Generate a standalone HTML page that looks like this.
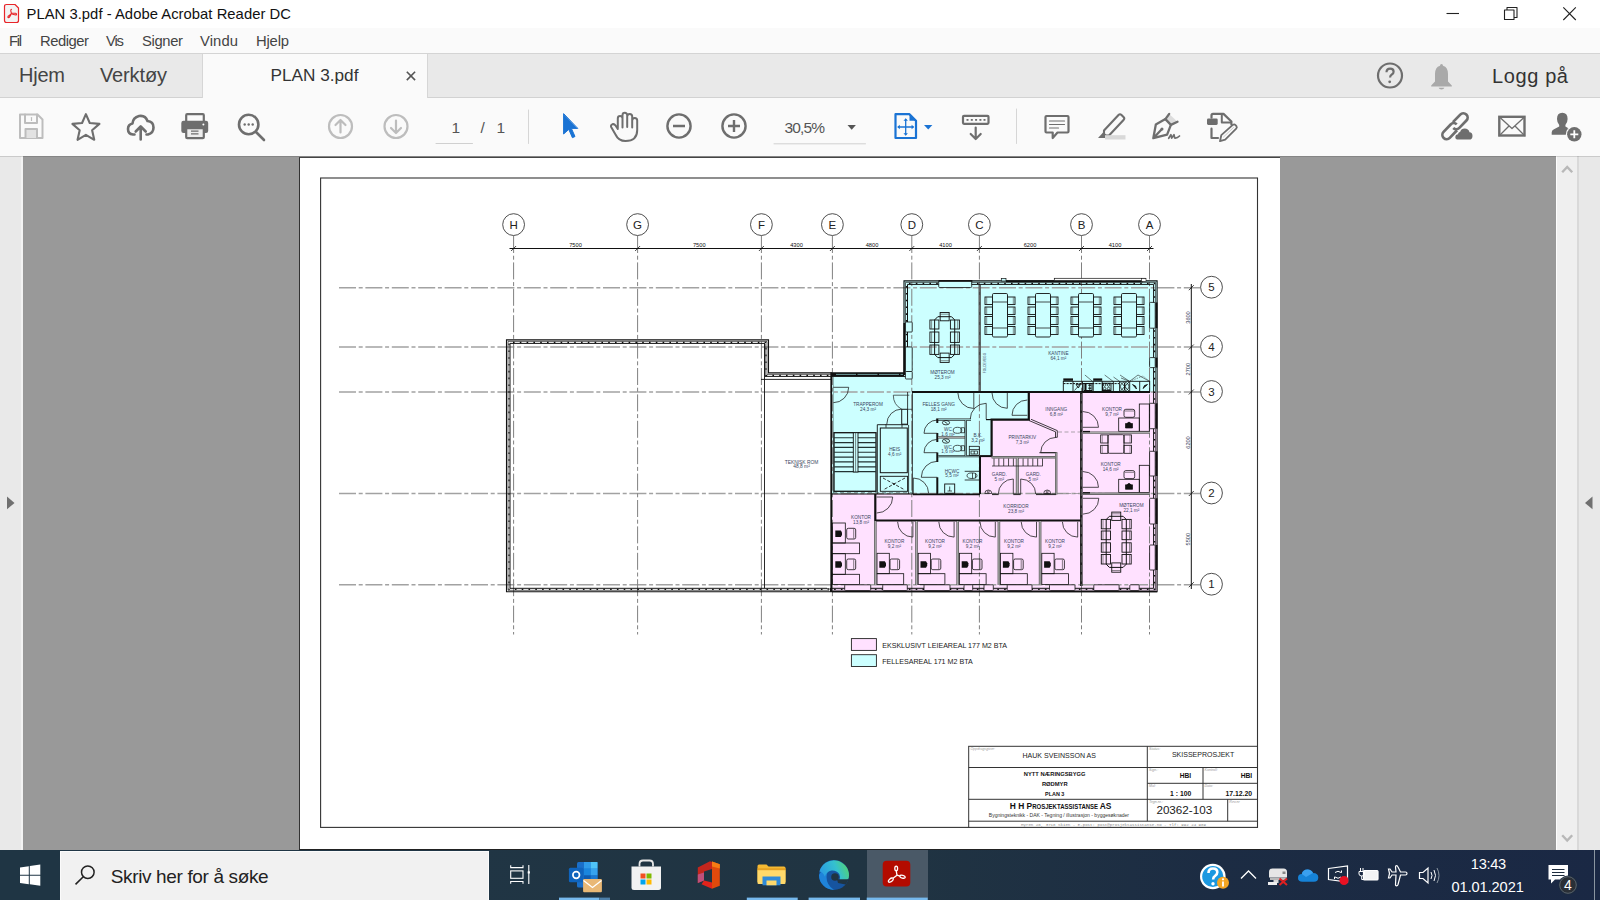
<!DOCTYPE html>
<html><head><meta charset="utf-8"><title>PLAN 3.pdf - Adobe Acrobat Reader DC</title>
<style>
*{box-sizing:border-box;margin:0;padding:0}
html,body{width:1600px;height:900px;overflow:hidden;background:#fff;font-family:"Liberation Sans",sans-serif;}
.abs{position:absolute}
#titlebar{left:0;top:0;width:1600px;height:28px;background:#fff}
#menubar{left:0;top:28px;width:1600px;height:26px;background:#fafafa;border-bottom:1px solid #d4d4d4}
#tabbar{left:0;top:54px;width:1600px;height:44px;background:#e9e9e9;border-bottom:1px solid #d2d2d2}
#tab{left:202px;top:54px;width:226px;height:44px;background:#fafafa;border-left:1px solid #d6d6d6;border-right:1px solid #d6d6d6}
#toolbar{left:0;top:98px;width:1600px;height:58px;background:#fafafa}
#docarea{left:0;top:156px;width:1600px;height:694px;background:#999}
#leftpane{left:0;top:156px;width:23px;height:694px;background:#e9e9e9;border-right:2px solid #f3f3f3}
#rightpane{left:1579px;top:156px;width:21px;height:694px;background:#e8e8e8}
#scroll{left:1556px;top:156px;width:23px;height:694px;background:#efefef;border-right:2px solid #d9d9d9;border-left:1px solid #fdfdfd}
#page{left:299px;top:157px;width:981px;height:693px;background:#fff;border-left:1px solid #333;border-top:1px solid #444;border-bottom:1px solid #222}
#taskbar{left:0;top:850px;width:1600px;height:50px;background:linear-gradient(90deg,#203646 0%,#203442 55%,#1c2c43 76%,#1a2844 100%)}
.t{position:absolute;white-space:nowrap;color:#222}
</style></head><body>
<div class="abs" id="titlebar"></div>
<div class="abs" id="menubar"></div>
<div class="abs" id="tabbar"></div>
<div class="abs" id="tab"></div>
<div class="abs" id="toolbar"></div>
<div class="abs" id="docarea"></div>
<div class="abs" id="leftpane"></div>
<div class="abs" id="scroll"></div>
<div class="abs" id="rightpane"></div>
<div class="abs" id="page"></div>
<div class="abs" id="taskbar"></div>
<div class="t" style="left:26.50px;top:5.97px;font-size:14.80px;color:#111;letter-spacing:0.035px;line-height:17.005px;">PLAN 3.pdf - Adobe Acrobat Reader DC</div>
<div class="t" style="left:9.00px;top:32.67px;font-size:14.80px;color:#444;letter-spacing:-1.309px;line-height:17.005px;">Fil</div>
<div class="t" style="left:40.00px;top:32.67px;font-size:14.80px;color:#444;letter-spacing:-0.472px;line-height:17.005px;">Rediger</div>
<div class="t" style="left:106.00px;top:32.67px;font-size:14.80px;color:#444;letter-spacing:-1.147px;line-height:17.005px;">Vis</div>
<div class="t" style="left:142.00px;top:32.67px;font-size:14.80px;color:#444;letter-spacing:-0.357px;line-height:17.005px;">Signer</div>
<div class="t" style="left:200.00px;top:32.67px;font-size:14.80px;color:#444;letter-spacing:0.103px;line-height:17.005px;">Vindu</div>
<div class="t" style="left:256.00px;top:32.67px;font-size:14.80px;color:#444;letter-spacing:-0.182px;line-height:17.005px;">Hjelp</div>
<div class="t" style="left:19.00px;top:63.88px;font-size:20.00px;color:#444;letter-spacing:-0.224px;line-height:22.980px;">Hjem</div>
<div class="t" style="left:100.00px;top:63.88px;font-size:20.00px;color:#444;letter-spacing:-0.133px;line-height:22.980px;">Verktøy</div>
<div class="t" style="left:270.50px;top:66.16px;font-size:17.20px;color:#333;letter-spacing:0.004px;line-height:19.763px;">PLAN 3.pdf</div>
<div class="t" style="left:1492.00px;top:64.58px;font-size:20.00px;color:#333;letter-spacing:0.617px;line-height:22.980px;">Logg på</div>
<div class="t" style="left:451.50px;top:118.72px;font-size:15.50px;color:#555;letter-spacing:0.000px;line-height:17.809px;">1</div>
<div class="t" style="left:480.50px;top:118.72px;font-size:15.50px;color:#555;letter-spacing:0.000px;line-height:17.809px;">/</div>
<div class="t" style="left:496.50px;top:118.72px;font-size:15.50px;color:#555;letter-spacing:0.000px;line-height:17.809px;">1</div>
<div class="t" style="left:784.40px;top:118.72px;font-size:15.50px;color:#555;letter-spacing:-0.837px;line-height:17.809px;">30,5%</div>
<svg class="abs" style="left:0;top:0" width="1600" height="157" viewBox="0 0 1600 157" fill="none" stroke-linecap="round" stroke-linejoin="round">
<path d="M6.5 4.5h8.5l3.5 3.5v12.5q0 2-2 2h-10q-2 0-2-2v-14q0-2 2-2z" fill="#f3f3f3" stroke="#e8252a" stroke-width="1.2"/>
<g stroke="#e8252a" stroke-width="1.1"><path d="M11.5 9.2c-.9 0-1 1.6 0 4.2M11.5 13.4c-1.2 2-3.3 2.3-3.6 3.4-.3 1 1.300 1.300 2.100-.600.5-1 1.100-2 1.500-2.800zM11.500 13.400c1.200 1.400 3 1.200 4.200 1.500 1.200.300 1.200-1.300-.2-1.600-1.300-.2-2.700.100-4 .100z"/></g>
<g stroke="#222" stroke-width="1.1" stroke-linecap="butt"><path d="M1446.500 13.500h12.500"/><rect x="1504.500" y="10" width="9.500" height="9.500"/><path d="M1507 10v-2.500q0 0 0 0h10v10h-3" /><path d="M1563.300 7.300l12.500 12.700M1575.800 7.300l-12.500 12.700"/></g>
<path d="M406.800 71.800l8.300 8.300M415.100 71.800l-8.300 8.300" stroke="#555" stroke-width="1.600" stroke-linecap="butt"/>
<circle cx="1390" cy="75.500" r="12" stroke="#6e6e6e" stroke-width="2.200"/>
<path d="M1386.500 72.300q0-3.600 3.600-3.600 3.500 0 3.500 3 0 1.800-1.800 2.800-1.700 1-1.700 3" stroke="#6e6e6e" stroke-width="2.200" stroke-linecap="butt"/><circle cx="1389.700" cy="81.800" r="1.400" fill="#6e6e6e"/>
<path d="M1441.500 64q1.500 0 1.500 1.800 5 1.500 5 8.200v7.500l3.800 4v1h-20.600v-1l3.800-4v-7.500q0-6.700 5-8.200 0-1.800 1.500-1.800zM1438.600 87.800h5.800q-.6 1.700-2.900 1.700t-2.900-1.700z" fill="#a9a9a9"/>
<g stroke="#bdbdbd" stroke-width="2"><path d="M20 114.500h17.500l5 5v18.500h-22.500z"/><path d="M25 114.500v8.500h12v-8.500" /><path d="M25.500 138v-9h11.500v9" fill="#e2e2e2"/><path d="M31.500 117.500v3" stroke-width="1.200"/></g>
<path d="M85.90 114.10L89.74 123.02L99.41 123.91L92.11 130.32L94.25 139.79L85.90 134.83L77.55 139.79L79.69 130.32L72.39 123.91L82.06 123.02Z" stroke="#6e6e6e" stroke-width="2.100" stroke-linejoin="round"/>
<g stroke="#6e6e6e" stroke-width="2.600"><path d="M134.500 134.500h-1.500q-5-.5-5-5.500 0-4.500 4.500-5.500 .5-6 6.500-7.500 6.500-1 8.500 5 6 .5 6 6.500 0 5.500-5.500 7h-1.500"/><path d="M140.700 139.500v-12.500M135.700 131.500l5-5 5 5"/></g>
<rect x="186.200" y="114.200" width="17.600" height="9" rx="1" stroke="#6e6e6e" stroke-width="2.200" fill="#fafafa"/><rect x="181.300" y="120.800" width="26.900" height="12.200" rx="2.200" fill="#6e6e6e"/><rect x="186.200" y="128.200" width="17.600" height="10" rx="1" stroke="#6e6e6e" stroke-width="2.200" fill="#ededed"/><path d="M191 131.200h7.500M191 133.900h7.500" stroke="#6e6e6e" stroke-width="1.200" stroke-linecap="butt"/><circle cx="203.400" cy="124.500" r="1" fill="#fff"/>
<g stroke="#6e6e6e" stroke-width="2.600"><circle cx="248.700" cy="124.500" r="9.700"/><path d="M256 132l8 8"/></g><g fill="#6e6e6e"><circle cx="244.700" cy="124.500" r="1.200"/><circle cx="248.700" cy="124.500" r="1.200"/><circle cx="252.700" cy="124.500" r="1.200"/></g>
<g stroke="#bdbdbd" stroke-width="2.200"><circle cx="340.5" cy="126.500" r="11.500"/><path d="M340.5 120.5v12.0M335.5 125.0l5 -5l5 5"/></g>
<g stroke="#bdbdbd" stroke-width="2.200"><circle cx="396.0" cy="126.500" r="11.500"/><path d="M396.0 120.5v12.0M391.0 128.0l5 5l5 -5"/></g>
<path d="M436 143.500h36.500" stroke="#d0d0d0" stroke-width="1"/>
<path d="M528.500 110v33.500M1016.500 109v34.500" stroke="#d6d6d6" stroke-width="1"/>
<path d="M563.600 114v20l5.200-4.600 3.600 8.300 2.600-1.200-3.600-8.100h6z" fill="#1a73d4" stroke="#1a73d4" stroke-width="1" stroke-linejoin="round"/>
<path d="M617.800 128.500V118.400a2.350 2.350 0 0 1 4.700 0V127.500M622.500 118.500V115.200a2.350 2.350 0 0 1 4.700 0V127M627.200 116.500a2.500 2.500 0 0 1 5 0V127.500M632.200 120.500a2.500 2.500 0 0 1 5 0V130Q637.200 141 625.500 141 618.500 141 615.500 134.500L611.300 127.300Q610.300 125.200 612.300 124.300 614.200 123.600 615.500 125.500L617.800 129" stroke="#6e6e6e" stroke-width="2"/>
<g stroke="#6e6e6e" stroke-width="2.400"><circle cx="679" cy="126" r="11.600"/><circle cx="734" cy="126" r="11.600"/><path d="M673 126h12M728 126h12M734 120v12" stroke-linecap="butt"/></g>
<path d="M847.500 125h8.400l-4.200 4.800z" fill="#555"/>
<path d="M774 143.800h91.500" stroke="#d0d0d0" stroke-width="1"/>
<g stroke="#1a73d4" stroke-width="2.200"><path d="M895.500 114.200h14l6.500 6.500v17.300h-20.500z" stroke-linejoin="round"/></g>
<path d="M909.500 114.200v6.500h6.500z" fill="#1a73d4"/>
<g stroke="#1a73d4" stroke-width="1.300" fill="#1a73d4"><path d="M905.700 119.500v15M898.500 127h14.500" /><path d="M905.700 118.200l2.200 2.600h-4.400zM905.700 135.800l2.200-2.600h-4.400zM897.200 127l2.600-2.200v4.400zM914.200 127l-2.600-2.200v4.400z" stroke="none"/></g>
<path d="M924 125h8.400l-4.200 4.600z" fill="#1a73d4"/>
<g stroke="#6e6e6e" stroke-width="2.200"><rect x="963" y="115.800" width="25.500" height="8" rx="1"/><path d="M975.700 127.500v11M970.700 134l5 5 5-5"/></g><g fill="#6e6e6e"><rect x="966.500" y="119" width="2" height="1.800"/><rect x="970.800" y="119" width="2" height="1.800"/><rect x="975.100" y="119" width="2" height="1.800"/><rect x="979.400" y="119" width="2" height="1.800"/><rect x="983.500" y="119" width="2" height="1.800"/></g>
<g stroke="#6e6e6e"><path d="M1046.500 116h21q1 0 1 1v14.500q0 1-1 1h-10l-4.800 5.500v-5.500h-6.200q-1 0-1-1v-14.500q0-1 1-1z" stroke-width="2.200"/><path d="M1049.500 121h15M1049.500 124.500h15M1049.500 128h9" stroke-width="1.200"/></g>
<g stroke="#6e6e6e" stroke-width="2.100"><path d="M1104 130.500l14.500-15.500q1.500-1.500 3 0l2 2q1.500 1.500 0 3l-14.500 15.500h-4.500l-.5-1.500z"/></g><path d="M1103.500 132l3.500 3.500-1.500 2.500h-7.500z" fill="#6e6e6e"/><rect x="1105" y="135.200" width="20.500" height="4.300" fill="#d9d9d9"/>
<path d="M1169.200 113.900l8.300 7.900-6.600 3.100-5.500-5.800z" fill="#dcdcdc"/>
<g stroke="#6e6e6e" stroke-width="2.300"><path d="M1153.300 138.200l2.500-13.600 9.600-5.500 5.500 5.800-3.800 9.700zM1154 137.500l7.500-8"/><path d="M1165.400 119.100l3.800-5.200M1170.900 124.900l6.600-3.100"/></g><circle cx="1162" cy="129" r="1.500" fill="#6e6e6e"/><path d="M1168.700 138.300l2.200-3.600 .8 3.400 2.300-3.400 .7 3.300q2.500.300 4.800-2" stroke="#6e6e6e" stroke-width="1.700"/>
<g stroke="#6e6e6e" stroke-width="2.200"><path d="M1211.500 117.700v-2.300q0-1.500 1.500-1.500h10.500l7.900 7.600v3.100M1211.500 128.700v9.300h6.500"/><path d="M1221.800 115.300v7.200h8.500" stroke-width="2"/><path d="M1221.300 135.200l11.500-10.300q1.500-1 2.700.200l.900 1q1 1.300-.200 2.500l-11 11.100-5.200 1.500z" stroke-width="1.800"/><path d="M1223.500 137l10-9.500" stroke-width="1" stroke="#ccc"/></g><rect x="1207" y="118.400" width="10.700" height="6.500" rx="1.300" fill="#6e6e6e"/>
<g stroke="#6e6e6e" stroke-width="2.700" fill="none" stroke-linecap="butt"><path d="M1452.95 122.13L1460.24 114.58A4.3 4.3 0 0 1 1466.43 120.55L1459.34 127.89A4.3 4.3 0 0 1 1453.26 128.00"/><path d="M1457.05 130.27L1449.76 137.82A4.3 4.3 0 0 1 1443.57 131.85L1450.66 124.51A4.3 4.3 0 0 1 1456.74 124.40"/></g>
<path d="M1458.300 139.600q-3 0-3-2.600 0-2.400 2.600-2.700 .3-2 2.300-2.500 1-3.200 4.500-3.200 3.800 0 4.800 3.700 3 .3 3 3.600 0 3.700-3.500 3.700z" fill="#6e6e6e" stroke="#fafafa" stroke-width="1.400" paint-order="stroke"/>
<g stroke="#6e6e6e"><rect x="1499.300" y="116.800" width="25.200" height="18.700" stroke-width="2.400" stroke-linejoin="miter"/><path d="M1499.500 117l12.500 11.500 12.500-11.500M1499.500 135.500l9.500-9.500M1524.500 135.500l-9.500-9.500" stroke-width="1.300"/></g>
<path d="M1562.300 112.700q5.300 0 5.300 6.200 0 3.700-2.200 6v1.600q2.200 1.500 6 2.800 2.300.800 2.300 3v2.500h-22v-2.500q0-2.200 2.300-3l5.200-2.800v-1.600q-2.200-2.300-2.200-6 0-6.200 5.300-6.200z" fill="#6e6e6e"/><circle cx="1574.300" cy="134.300" r="8.400" fill="#fafafa"/><circle cx="1574.300" cy="134.300" r="7.200" fill="#6e6e6e"/><path d="M1570.300 134.300h8M1574.300 130.300v8" stroke="#fff" stroke-width="1.800" stroke-linecap="butt"/>
</svg>
<svg class="abs" style="left:0;top:156px" width="1600" height="694" viewBox="0 156 1600 694">
<path d="M7 496.500l7.500 6.400-7.500 6.400z" fill="#707070"/>
<path d="M1592.500 496.500l-7.500 6.400 7.500 6.400z" fill="#707070"/>
<path d="M1562.200 172.300l5-5.300 5 5.300" stroke="#b8b8b8" stroke-width="2.400" fill="none"/>
<path d="M1562.200 835.200l5 5.300 5-5.300" stroke="#b8b8b8" stroke-width="2.400" fill="none"/>
<rect x="0" y="156" width="1600" height="1" fill="#000" opacity="0.13"/>
</svg>
<svg class="abs" style="left:300px;top:158px" width="980" height="691" viewBox="300 158 980 691" fill="none" font-family="Liberation Sans, sans-serif">
<rect x="320.60" y="178.00" width="936.90" height="649.40" stroke="#333" stroke-width="1.10" fill="none" />
<path d="M903.50 280.50L1157.50 280.50L1157.50 392.00L1029.00 392.00L1029.00 420.00L992.00 420.00L992.00 456.00L980.00 456.00L980.00 494.00L831.00 494.00L831.00 372.50L903.50 372.50Z" fill="#ccffff" stroke="none"/>
<path d="M1029.00 392.00L1157.50 392.00L1157.50 592.00L831.00 592.00L831.00 494.00L980.00 494.00L980.00 456.00L992.00 456.00L992.00 420.00L1029.00 420.00Z" fill="#ffe1ff" stroke="none"/>
<path d="M339.00 287.70L1200.00 287.70" stroke="#a2a2a2" stroke-width="1.50" stroke-dasharray="17 2.7 4 2.7" />
<path d="M339.00 347.00L1200.00 347.00" stroke="#a2a2a2" stroke-width="1.50" stroke-dasharray="17 2.7 4 2.7" />
<path d="M339.00 392.00L1200.00 392.00" stroke="#a2a2a2" stroke-width="1.50" stroke-dasharray="17 2.7 4 2.7" />
<path d="M339.00 493.50L1200.00 493.50" stroke="#a2a2a2" stroke-width="1.50" stroke-dasharray="17 2.7 4 2.7" />
<path d="M339.00 584.70L1200.00 584.70" stroke="#a2a2a2" stroke-width="1.50" stroke-dasharray="17 2.7 4 2.7" />
<path d="M513.60 236.00L513.60 634.50" stroke="#808080" stroke-width="1.00" stroke-dasharray="17 2.7 4 2.7" />
<path d="M637.60 236.00L637.60 634.50" stroke="#808080" stroke-width="1.00" stroke-dasharray="17 2.7 4 2.7" />
<path d="M761.40 236.00L761.40 634.50" stroke="#808080" stroke-width="1.00" stroke-dasharray="17 2.7 4 2.7" />
<path d="M832.40 236.00L832.40 634.50" stroke="#808080" stroke-width="1.00" stroke-dasharray="17 2.7 4 2.7" />
<path d="M911.80 236.00L911.80 634.50" stroke="#808080" stroke-width="1.00" stroke-dasharray="17 2.7 4 2.7" />
<path d="M979.40 236.00L979.40 634.50" stroke="#808080" stroke-width="1.00" stroke-dasharray="17 2.7 4 2.7" />
<path d="M1081.50 236.00L1081.50 634.50" stroke="#808080" stroke-width="1.00" stroke-dasharray="17 2.7 4 2.7" />
<path d="M1149.50 236.00L1149.50 634.50" stroke="#808080" stroke-width="1.00" stroke-dasharray="17 2.7 4 2.7" />
<circle cx="513.6" cy="224.6" r="10.9" stroke="#222" stroke-width="0.8" fill="#fff"/>
<text x="513.60" y="228.80" font-size="11.50" fill="#222" stroke="none" text-anchor="middle" >H</text>
<circle cx="637.6" cy="224.6" r="10.9" stroke="#222" stroke-width="0.8" fill="#fff"/>
<text x="637.60" y="228.80" font-size="11.50" fill="#222" stroke="none" text-anchor="middle" >G</text>
<circle cx="761.4" cy="224.6" r="10.9" stroke="#222" stroke-width="0.8" fill="#fff"/>
<text x="761.40" y="228.80" font-size="11.50" fill="#222" stroke="none" text-anchor="middle" >F</text>
<circle cx="832.4" cy="224.6" r="10.9" stroke="#222" stroke-width="0.8" fill="#fff"/>
<text x="832.40" y="228.80" font-size="11.50" fill="#222" stroke="none" text-anchor="middle" >E</text>
<circle cx="911.8" cy="224.6" r="10.9" stroke="#222" stroke-width="0.8" fill="#fff"/>
<text x="911.80" y="228.80" font-size="11.50" fill="#222" stroke="none" text-anchor="middle" >D</text>
<circle cx="979.4" cy="224.6" r="10.9" stroke="#222" stroke-width="0.8" fill="#fff"/>
<text x="979.40" y="228.80" font-size="11.50" fill="#222" stroke="none" text-anchor="middle" >C</text>
<circle cx="1081.5" cy="224.6" r="10.9" stroke="#222" stroke-width="0.8" fill="#fff"/>
<text x="1081.50" y="228.80" font-size="11.50" fill="#222" stroke="none" text-anchor="middle" >B</text>
<circle cx="1149.5" cy="224.6" r="10.9" stroke="#222" stroke-width="0.8" fill="#fff"/>
<text x="1149.50" y="228.80" font-size="11.50" fill="#222" stroke="none" text-anchor="middle" >A</text>
<circle cx="1211.5" cy="287.2" r="10.9" stroke="#222" stroke-width="0.8" fill="#fff"/>
<text x="1211.50" y="291.40" font-size="11.50" fill="#222" stroke="none" text-anchor="middle" >5</text>
<circle cx="1211.5" cy="346.5" r="10.9" stroke="#222" stroke-width="0.8" fill="#fff"/>
<text x="1211.50" y="350.70" font-size="11.50" fill="#222" stroke="none" text-anchor="middle" >4</text>
<circle cx="1211.5" cy="391.5" r="10.9" stroke="#222" stroke-width="0.8" fill="#fff"/>
<text x="1211.50" y="395.70" font-size="11.50" fill="#222" stroke="none" text-anchor="middle" >3</text>
<circle cx="1211.5" cy="493.0" r="10.9" stroke="#222" stroke-width="0.8" fill="#fff"/>
<text x="1211.50" y="497.20" font-size="11.50" fill="#222" stroke="none" text-anchor="middle" >2</text>
<circle cx="1211.5" cy="584.2" r="10.9" stroke="#222" stroke-width="0.8" fill="#fff"/>
<text x="1211.50" y="588.40" font-size="11.50" fill="#222" stroke="none" text-anchor="middle" >1</text>
<path d="M509.50 248.50L1153.50 248.50" stroke="#111" stroke-width="1.00" />
<path d="M511.10 251.00L516.10 246.00" stroke="#111" stroke-width="0.80" />
<path d="M635.10 251.00L640.10 246.00" stroke="#111" stroke-width="0.80" />
<path d="M758.90 251.00L763.90 246.00" stroke="#111" stroke-width="0.80" />
<path d="M829.90 251.00L834.90 246.00" stroke="#111" stroke-width="0.80" />
<path d="M909.30 251.00L914.30 246.00" stroke="#111" stroke-width="0.80" />
<path d="M976.90 251.00L981.90 246.00" stroke="#111" stroke-width="0.80" />
<path d="M1079.00 251.00L1084.00 246.00" stroke="#111" stroke-width="0.80" />
<path d="M1147.00 251.00L1152.00 246.00" stroke="#111" stroke-width="0.80" />
<text x="575.50" y="246.50" font-size="5.70" fill="#111" stroke="none" text-anchor="middle" >7500</text>
<text x="699.25" y="246.50" font-size="5.70" fill="#111" stroke="none" text-anchor="middle" >7500</text>
<text x="796.50" y="246.50" font-size="5.70" fill="#111" stroke="none" text-anchor="middle" >4300</text>
<text x="872.00" y="246.50" font-size="5.70" fill="#111" stroke="none" text-anchor="middle" >4800</text>
<text x="945.50" y="246.50" font-size="5.70" fill="#111" stroke="none" text-anchor="middle" >4100</text>
<text x="1030.00" y="246.50" font-size="5.70" fill="#111" stroke="none" text-anchor="middle" >6200</text>
<text x="1115.00" y="246.50" font-size="5.70" fill="#111" stroke="none" text-anchor="middle" >4100</text>
<path d="M1191.30 284.00L1191.30 589.00" stroke="#111" stroke-width="1.00" />
<path d="M1188.80 290.20L1193.80 285.20" stroke="#111" stroke-width="0.80" />
<path d="M1188.80 349.50L1193.80 344.50" stroke="#111" stroke-width="0.80" />
<path d="M1188.80 394.50L1193.80 389.50" stroke="#111" stroke-width="0.80" />
<path d="M1188.80 496.00L1193.80 491.00" stroke="#111" stroke-width="0.80" />
<path d="M1188.80 587.20L1193.80 582.20" stroke="#111" stroke-width="0.80" />
<text transform="translate(1190 317.5) rotate(-90)" font-size="5.6" fill="#2a3550" text-anchor="middle">3600</text>
<text transform="translate(1190 369.2) rotate(-90)" font-size="5.6" fill="#2a3550" text-anchor="middle">2700</text>
<text transform="translate(1190 442.5) rotate(-90)" font-size="5.6" fill="#2a3550" text-anchor="middle">6200</text>
<text transform="translate(1190 539.2) rotate(-90)" font-size="5.6" fill="#2a3550" text-anchor="middle">5500</text>
<path d="M830.50 588.00L830.50 591.80L506.50 591.80L506.50 339.90L768.50 339.90L768.50 372.90L831.00 372.90" stroke="#111" stroke-width="1.10" />
<path d="M829.00 588.00L829.00 590.30L508.00 590.30L508.00 341.40L767.00 341.40L767.00 374.40L831.00 374.40" stroke="#222" stroke-width="0.70" />
<path d="M828.00 588.00L828.00 589.30L509.00 589.30L509.00 342.40L766.00 342.40L766.00 375.40L831.00 375.40" stroke="#111" stroke-width="1.20" stroke-dasharray="1.6 5.2" />
<path d="M827.00 588.00L827.00 588.30L510.00 588.30L510.00 343.40L765.00 343.40L765.00 376.40L831.00 376.40" stroke="#111" stroke-width="1.00" />
<path d="M764.50 344.00L764.50 588.00" stroke="#111" stroke-width="0.90" />
<path d="M761.00 379.40L832.00 379.40" stroke="#111" stroke-width="0.90" />
<path d="M831.00 372.90L904.00 372.90L904.00 280.90L1157.10 280.90L1157.10 591.80L831.00 591.80" stroke="#111" stroke-width="1.10" />
<path d="M831.00 374.40L905.50 374.40L905.50 282.40L1155.60 282.40L1155.60 590.30L831.00 590.30" stroke="#222" stroke-width="0.70" />
<path d="M831.00 375.40L906.50 375.40L906.50 283.40L1154.60 283.40L1154.60 589.30L831.00 589.30" stroke="#111" stroke-width="1.20" stroke-dasharray="1.6 5.2" />
<path d="M831.00 376.40L907.50 376.40L907.50 284.40L1153.60 284.40L1153.60 588.30L831.00 588.30" stroke="#111" stroke-width="1.00" />
<path d="M831.20 372.40L831.20 592.00" stroke="#111" stroke-width="1.70" />
<path d="M833.40 377.00L833.40 494.00" stroke="#577" stroke-width="0.60" />
<rect x="851.40" y="638.60" width="25.00" height="11.80" stroke="#222" stroke-width="0.90" fill="#ffe1ff" />
<rect x="851.40" y="654.70" width="25.00" height="11.80" stroke="#222" stroke-width="0.90" fill="#ccffff" />
<text x="882.20" y="648.20" font-size="7.30" fill="#222" textLength="124.80" lengthAdjust="spacingAndGlyphs" >EKSKLUSIVT LEIEAREAL 177 M2 BTA</text>
<text x="882.20" y="663.90" font-size="7.30" fill="#222" textLength="90.50" lengthAdjust="spacingAndGlyphs" >FELLESAREAL 171 M2 BTA</text>
<path d="M968.70 746.30L968.70 827.50" stroke="#333" stroke-width="1.00" />
<path d="M968.20 746.30L1258.00 746.30" stroke="#333" stroke-width="1.00" />
<path d="M968.70 767.50L1258.00 767.50" stroke="#333" stroke-width="1.00" />
<path d="M968.70 799.30L1258.00 799.30" stroke="#333" stroke-width="1.00" />
<path d="M968.70 821.20L1258.00 821.20" stroke="#333" stroke-width="1.00" />
<path d="M1147.30 746.30L1147.30 821.20" stroke="#333" stroke-width="1.00" />
<path d="M1147.30 783.30L1258.00 783.30" stroke="#333" stroke-width="1.00" />
<path d="M1203.00 767.50L1203.00 799.30" stroke="#333" stroke-width="1.00" />
<path d="M1227.70 799.30L1227.70 821.20" stroke="#333" stroke-width="1.00" />
<text x="1022.50" y="757.50" font-size="7.80" fill="#222" textLength="73.50" lengthAdjust="spacingAndGlyphs" >HAUK SVEINSSON AS</text>
<text x="1023.80" y="775.90" font-size="6.10" fill="#111" textLength="61.60" lengthAdjust="spacingAndGlyphs" font-weight="bold" >NYTT NÆRINGSBYGG</text>
<text x="1041.90" y="785.90" font-size="6.10" fill="#111" textLength="25.80" lengthAdjust="spacingAndGlyphs" font-weight="bold" >RØDMYR</text>
<text x="1045.00" y="795.60" font-size="6.10" fill="#111" textLength="19.40" lengthAdjust="spacingAndGlyphs" font-weight="bold" >PLAN 3</text>
<text x="1009.8" y="809" font-size="9.8" fill="#111" font-weight="bold" textLength="101.7" lengthAdjust="spacingAndGlyphs">H H P<tspan font-size="7">ROSJEKTASSISTANSE </tspan> AS</text>
<text x="988.80" y="816.50" font-size="5.30" fill="#333" textLength="140.20" lengthAdjust="spacingAndGlyphs" >Bygningsteknikk - DAK - Tegning / illustrasjon - byggesøknader</text>
<text x="1021.00" y="825.60" font-size="3.60" fill="#888" textLength="185.00" lengthAdjust="spacingAndGlyphs" font-family="Liberation Mono, monospace">Myren 28, 3718 Skien - E-post: post@prosjektassistanse.no - Tlf: 992 24 989</text>
<text x="1171.90" y="757.40" font-size="7.40" fill="#222" textLength="62.40" lengthAdjust="spacingAndGlyphs" >SKISSEPROSJEKT</text>
<text x="1179.80" y="778.00" font-size="6.60" fill="#111" textLength="11.40" lengthAdjust="spacingAndGlyphs" font-weight="bold" >HBI</text>
<text x="1240.70" y="778.00" font-size="6.60" fill="#111" textLength="11.50" lengthAdjust="spacingAndGlyphs" font-weight="bold" >HBI</text>
<text x="1170.10" y="795.60" font-size="6.30" fill="#111" textLength="21.10" lengthAdjust="spacingAndGlyphs" font-weight="bold" >1 : 100</text>
<text x="1225.40" y="795.60" font-size="6.30" fill="#111" textLength="26.80" lengthAdjust="spacingAndGlyphs" font-weight="bold" >17.12.20</text>
<text x="1156.40" y="813.90" font-size="11.00" fill="#222" textLength="55.80" lengthAdjust="spacingAndGlyphs" >20362-103</text>
<text x="970.5" y="749.8" font-size="3.6" fill="#999" font-style="italic">Oppdragsgiver:</text>
<text x="1149.0" y="749.8" font-size="3.6" fill="#999" font-style="italic">Status:</text>
<text x="1149.0" y="770.8" font-size="3.6" fill="#999" font-style="italic">Sign.:</text>
<text x="1204.5" y="770.8" font-size="3.6" fill="#999" font-style="italic">Kontroll:</text>
<text x="1149.0" y="786.5" font-size="3.6" fill="#999" font-style="italic">Mål:</text>
<text x="1204.5" y="786.5" font-size="3.6" fill="#999" font-style="italic">Dato:</text>
<text x="1149.0" y="803.3" font-size="3.6" fill="#999" font-style="italic">Tegn.nr.:</text>
<text x="1229.3" y="803.3" font-size="3.6" fill="#999" font-style="italic">Rev.nr</text>
<path d="M979.70 285.00L979.70 392.00" stroke="#4a4a4a" stroke-width="2.30" />
<path d="M979.70 285.00L979.70 392.00" stroke="#888" stroke-width="0.50" stroke-dasharray="7 3" />
<text transform="translate(986.2 363) rotate(-90)" font-size="3.3" fill="#3a4660" text-anchor="middle">FOLDEVEGG</text>
<path d="M912.00 392.00L1150.00 392.00" stroke="#111" stroke-width="1.80" />
<rect x="929.90" y="320.00" width="9.00" height="9.00" stroke="#111" stroke-width="0.90" fill="none" />
<path d="M931.60 320.00L931.60 329.00" stroke="#444" stroke-width="0.60" />
<rect x="950.40" y="320.00" width="9.00" height="9.00" stroke="#111" stroke-width="0.90" fill="none" />
<path d="M957.70 320.00L957.70 329.00" stroke="#444" stroke-width="0.60" />
<rect x="929.90" y="332.00" width="9.00" height="10.40" stroke="#111" stroke-width="0.90" fill="none" />
<path d="M931.60 332.00L931.60 342.40" stroke="#444" stroke-width="0.60" />
<rect x="950.40" y="332.00" width="9.00" height="10.40" stroke="#111" stroke-width="0.90" fill="none" />
<path d="M957.70 332.00L957.70 342.40" stroke="#444" stroke-width="0.60" />
<rect x="929.90" y="345.00" width="9.00" height="9.40" stroke="#111" stroke-width="0.90" fill="none" />
<path d="M931.60 345.00L931.60 354.40" stroke="#444" stroke-width="0.60" />
<rect x="950.40" y="345.00" width="9.00" height="9.40" stroke="#111" stroke-width="0.90" fill="none" />
<path d="M957.70 345.00L957.70 354.40" stroke="#444" stroke-width="0.60" />
<rect x="940.15" y="312.50" width="9.00" height="8.30" stroke="#111" stroke-width="0.90" fill="none" />
<path d="M940.15 314.20L949.15 314.20" stroke="#444" stroke-width="0.60" />
<rect x="940.15" y="353.10" width="9.00" height="9.30" stroke="#111" stroke-width="0.90" fill="none" />
<path d="M940.15 360.70L949.15 360.70" stroke="#444" stroke-width="0.60" />
<path d="M937.80 316.70L951.50 316.70L954.70 319.90L954.70 354.40L951.50 357.60L937.80 357.60L934.60 354.40L934.60 319.90Z" fill="none" stroke="#111" stroke-width="1.00"/>
<text x="942.50" y="374.40" font-size="4.70" fill="#3a4660" stroke="none" text-anchor="middle" >MØTEROM</text>
<text x="942.50" y="379.10" font-size="4.70" fill="#3a4660" stroke="none" text-anchor="middle" >25,3 m²</text>
<rect x="985.00" y="297.00" width="7.50" height="7.50" stroke="#111" stroke-width="0.90" fill="none" />
<path d="M986.70 297.00L986.70 304.50" stroke="#444" stroke-width="0.60" />
<rect x="1007.50" y="297.00" width="7.50" height="7.50" stroke="#111" stroke-width="0.90" fill="none" />
<path d="M1013.30 297.00L1013.30 304.50" stroke="#444" stroke-width="0.60" />
<rect x="985.00" y="307.00" width="7.50" height="7.50" stroke="#111" stroke-width="0.90" fill="none" />
<path d="M986.70 307.00L986.70 314.50" stroke="#444" stroke-width="0.60" />
<rect x="1007.50" y="307.00" width="7.50" height="7.50" stroke="#111" stroke-width="0.90" fill="none" />
<path d="M1013.30 307.00L1013.30 314.50" stroke="#444" stroke-width="0.60" />
<rect x="985.00" y="316.50" width="7.50" height="8.00" stroke="#111" stroke-width="0.90" fill="none" />
<path d="M986.70 316.50L986.70 324.50" stroke="#444" stroke-width="0.60" />
<rect x="1007.50" y="316.50" width="7.50" height="8.00" stroke="#111" stroke-width="0.90" fill="none" />
<path d="M1013.30 316.50L1013.30 324.50" stroke="#444" stroke-width="0.60" />
<rect x="985.00" y="326.50" width="7.50" height="8.00" stroke="#111" stroke-width="0.90" fill="none" />
<path d="M986.70 326.50L986.70 334.50" stroke="#444" stroke-width="0.60" />
<rect x="1007.50" y="326.50" width="7.50" height="8.00" stroke="#111" stroke-width="0.90" fill="none" />
<path d="M1013.30 326.50L1013.30 334.50" stroke="#444" stroke-width="0.60" />
<rect x="992.50" y="293.5" width="15" height="43.500" rx="1.200" fill="#ccffff" stroke="#111" stroke-width="0.90"/>
<path d="M992.50 302.00L1007.50 302.00" stroke="#222" stroke-width="0.80" />
<path d="M992.50 328.00L1007.50 328.00" stroke="#222" stroke-width="0.80" />
<rect x="1028.00" y="297.00" width="7.50" height="7.50" stroke="#111" stroke-width="0.90" fill="none" />
<path d="M1029.70 297.00L1029.70 304.50" stroke="#444" stroke-width="0.60" />
<rect x="1050.50" y="297.00" width="7.50" height="7.50" stroke="#111" stroke-width="0.90" fill="none" />
<path d="M1056.30 297.00L1056.30 304.50" stroke="#444" stroke-width="0.60" />
<rect x="1028.00" y="307.00" width="7.50" height="7.50" stroke="#111" stroke-width="0.90" fill="none" />
<path d="M1029.70 307.00L1029.70 314.50" stroke="#444" stroke-width="0.60" />
<rect x="1050.50" y="307.00" width="7.50" height="7.50" stroke="#111" stroke-width="0.90" fill="none" />
<path d="M1056.30 307.00L1056.30 314.50" stroke="#444" stroke-width="0.60" />
<rect x="1028.00" y="316.50" width="7.50" height="8.00" stroke="#111" stroke-width="0.90" fill="none" />
<path d="M1029.70 316.50L1029.70 324.50" stroke="#444" stroke-width="0.60" />
<rect x="1050.50" y="316.50" width="7.50" height="8.00" stroke="#111" stroke-width="0.90" fill="none" />
<path d="M1056.30 316.50L1056.30 324.50" stroke="#444" stroke-width="0.60" />
<rect x="1028.00" y="326.50" width="7.50" height="8.00" stroke="#111" stroke-width="0.90" fill="none" />
<path d="M1029.70 326.50L1029.70 334.50" stroke="#444" stroke-width="0.60" />
<rect x="1050.50" y="326.50" width="7.50" height="8.00" stroke="#111" stroke-width="0.90" fill="none" />
<path d="M1056.30 326.50L1056.30 334.50" stroke="#444" stroke-width="0.60" />
<rect x="1035.50" y="293.5" width="15" height="43.500" rx="1.200" fill="#ccffff" stroke="#111" stroke-width="0.90"/>
<path d="M1035.50 302.00L1050.50 302.00" stroke="#222" stroke-width="0.80" />
<path d="M1035.50 328.00L1050.50 328.00" stroke="#222" stroke-width="0.80" />
<rect x="1071.00" y="297.00" width="7.50" height="7.50" stroke="#111" stroke-width="0.90" fill="none" />
<path d="M1072.70 297.00L1072.70 304.50" stroke="#444" stroke-width="0.60" />
<rect x="1093.50" y="297.00" width="7.50" height="7.50" stroke="#111" stroke-width="0.90" fill="none" />
<path d="M1099.30 297.00L1099.30 304.50" stroke="#444" stroke-width="0.60" />
<rect x="1071.00" y="307.00" width="7.50" height="7.50" stroke="#111" stroke-width="0.90" fill="none" />
<path d="M1072.70 307.00L1072.70 314.50" stroke="#444" stroke-width="0.60" />
<rect x="1093.50" y="307.00" width="7.50" height="7.50" stroke="#111" stroke-width="0.90" fill="none" />
<path d="M1099.30 307.00L1099.30 314.50" stroke="#444" stroke-width="0.60" />
<rect x="1071.00" y="316.50" width="7.50" height="8.00" stroke="#111" stroke-width="0.90" fill="none" />
<path d="M1072.70 316.50L1072.70 324.50" stroke="#444" stroke-width="0.60" />
<rect x="1093.50" y="316.50" width="7.50" height="8.00" stroke="#111" stroke-width="0.90" fill="none" />
<path d="M1099.30 316.50L1099.30 324.50" stroke="#444" stroke-width="0.60" />
<rect x="1071.00" y="326.50" width="7.50" height="8.00" stroke="#111" stroke-width="0.90" fill="none" />
<path d="M1072.70 326.50L1072.70 334.50" stroke="#444" stroke-width="0.60" />
<rect x="1093.50" y="326.50" width="7.50" height="8.00" stroke="#111" stroke-width="0.90" fill="none" />
<path d="M1099.30 326.50L1099.30 334.50" stroke="#444" stroke-width="0.60" />
<rect x="1078.50" y="293.5" width="15" height="43.500" rx="1.200" fill="#ccffff" stroke="#111" stroke-width="0.90"/>
<path d="M1078.50 302.00L1093.50 302.00" stroke="#222" stroke-width="0.80" />
<path d="M1078.50 328.00L1093.50 328.00" stroke="#222" stroke-width="0.80" />
<rect x="1114.00" y="297.00" width="7.50" height="7.50" stroke="#111" stroke-width="0.90" fill="none" />
<path d="M1115.70 297.00L1115.70 304.50" stroke="#444" stroke-width="0.60" />
<rect x="1136.50" y="297.00" width="7.50" height="7.50" stroke="#111" stroke-width="0.90" fill="none" />
<path d="M1142.30 297.00L1142.30 304.50" stroke="#444" stroke-width="0.60" />
<rect x="1114.00" y="307.00" width="7.50" height="7.50" stroke="#111" stroke-width="0.90" fill="none" />
<path d="M1115.70 307.00L1115.70 314.50" stroke="#444" stroke-width="0.60" />
<rect x="1136.50" y="307.00" width="7.50" height="7.50" stroke="#111" stroke-width="0.90" fill="none" />
<path d="M1142.30 307.00L1142.30 314.50" stroke="#444" stroke-width="0.60" />
<rect x="1114.00" y="316.50" width="7.50" height="8.00" stroke="#111" stroke-width="0.90" fill="none" />
<path d="M1115.70 316.50L1115.70 324.50" stroke="#444" stroke-width="0.60" />
<rect x="1136.50" y="316.50" width="7.50" height="8.00" stroke="#111" stroke-width="0.90" fill="none" />
<path d="M1142.30 316.50L1142.30 324.50" stroke="#444" stroke-width="0.60" />
<rect x="1114.00" y="326.50" width="7.50" height="8.00" stroke="#111" stroke-width="0.90" fill="none" />
<path d="M1115.70 326.50L1115.70 334.50" stroke="#444" stroke-width="0.60" />
<rect x="1136.50" y="326.50" width="7.50" height="8.00" stroke="#111" stroke-width="0.90" fill="none" />
<path d="M1142.30 326.50L1142.30 334.50" stroke="#444" stroke-width="0.60" />
<rect x="1121.50" y="293.5" width="15" height="43.500" rx="1.200" fill="#ccffff" stroke="#111" stroke-width="0.90"/>
<path d="M1121.50 302.00L1136.50 302.00" stroke="#222" stroke-width="0.80" />
<path d="M1121.50 328.00L1136.50 328.00" stroke="#222" stroke-width="0.80" />
<text x="1058.40" y="355.40" font-size="4.70" fill="#3a4660" stroke="none" text-anchor="middle" >KANTINE</text>
<text x="1058.40" y="360.40" font-size="4.70" fill="#3a4660" stroke="none" text-anchor="middle" >64,1 m²</text>
<rect x="1063.30" y="381.30" width="86.40" height="10.30" stroke="#111" stroke-width="0.90" fill="none" />
<path d="M1073.00 381.30L1073.00 391.60" stroke="#111" stroke-width="0.90" />
<path d="M1082.50 381.30L1082.50 391.60" stroke="#111" stroke-width="0.90" />
<path d="M1093.20 381.30L1093.20 391.60" stroke="#111" stroke-width="0.90" />
<path d="M1102.20 381.30L1102.20 391.60" stroke="#111" stroke-width="0.90" />
<path d="M1113.30 381.30L1113.30 391.60" stroke="#111" stroke-width="0.90" />
<path d="M1119.60 381.30L1119.60 391.60" stroke="#111" stroke-width="0.90" />
<path d="M1129.70 381.30L1129.70 391.60" stroke="#111" stroke-width="0.90" />
<path d="M1139.70 381.30L1139.70 391.60" stroke="#111" stroke-width="0.90" />
<path d="M1063.30 379.60L1073.00 379.60" stroke="#111" stroke-width="2.40" />
<path d="M1093.20 379.60L1102.20 379.60" stroke="#111" stroke-width="2.40" />
<path d="M1063.30 383.60L1119.00 383.60" stroke="#111" stroke-width="1.00" stroke-dasharray="2.2 1" />
<path d="M1084.90 375.00L1092.50 381.30" stroke="#222" stroke-width="0.60" />
<path d="M1104.70 375.00L1113.00 381.30" stroke="#222" stroke-width="0.60" />
<path d="M1113.50 377.00L1119.50 381.30" stroke="#222" stroke-width="0.60" />
<path d="M1120.00 375.00L1129.50 381.30" stroke="#222" stroke-width="0.60" />
<path d="M1121.00 378.00L1129.50 381.30" stroke="#222" stroke-width="0.60" />
<path d="M1129.70 381.30L1138.00 375.00L1149.50 381.30" stroke="#222" stroke-width="0.60" />
<path d="M1129.70 381.30L1143.00 376.00L1149.50 381.30" stroke="#333" stroke-width="0.50" stroke-dasharray="1.5 1" />
<path d="M1074.50 390.50L1081.00 383.00" stroke="#111" stroke-width="0.70" />
<path d="M1076 384.300h4.500l-2.200 3.700z" stroke="#111" stroke-width="0.9"/>
<rect x="1084.00" y="383.50" width="8.00" height="7.00" stroke="#111" stroke-width="1.00" fill="none" />
<path d="M1085.70 383.50L1085.70 390.50" stroke="#111" stroke-width="1.60" />
<path d="M1088.30 385.20L1091.30 385.20" stroke="#111" stroke-width="1.10" />
<path d="M1088.30 388.20L1091.30 388.20" stroke="#111" stroke-width="1.10" />
<path d="M1089.80 384.00L1089.80 390.00" stroke="#111" stroke-width="0.90" />
<circle cx="1104.6" cy="385" r="1.3" stroke="#111" stroke-width="0.7"/><circle cx="1108.6" cy="385" r="1.3" stroke="#111" stroke-width="0.7"/><circle cx="1104.6" cy="388.6" r="1.3" stroke="#111" stroke-width="0.7"/><circle cx="1108.6" cy="388.6" r="1.3" stroke="#111" stroke-width="0.7"/>
<rect x="1102.50" y="383.20" width="8.50" height="7.40" stroke="#111" stroke-width="0.90" fill="none" />
<path d="M1102.50 390.30L1111.00 390.30" stroke="#111" stroke-width="1.20" />
<path d="M1120.50 382.00L1129.00 391.00" stroke="#111" stroke-width="0.80" />
<path d="M1129.00 382.00L1120.50 391.00" stroke="#111" stroke-width="0.80" />
<path d="M1124.70 383.00L1124.70 390.00" stroke="#111" stroke-width="1.30" />
<circle cx="1124.700" cy="386.500" r="4.200" stroke="#111" stroke-width="0.7"/>
<path d="M1132.500 384.500l4 4.500-1-3zM1143 388.500l4.500-4-3 1z" fill="#111" stroke="#111" stroke-width="0.8"/>
<path d="M938.700 281v5.500q0 1 1 1h31q1 0 1-1v-5.500z" fill="#ccffff" stroke="#111" stroke-width="0.8"/>
<path d="M938.70 280.90L972.30 280.90" stroke="#111" stroke-width="1.60" />
<rect x="1001.30" y="278.40" width="4.70" height="2.60" stroke="#111" stroke-width="0.70" fill="#ccffff" />
<path d="M1006.00 281.30L1143.00 281.30" stroke="#111" stroke-width="2.00" />
<rect x="1054.30" y="278.30" width="91.00" height="2.30" stroke="#111" stroke-width="0.70" fill="#fff" />
<rect x="1141.50" y="278.60" width="4.50" height="2.90" stroke="#111" stroke-width="0.60" fill="#fff" />
<rect x="905.4" y="322.0" width="6.8" height="10.0" rx="0.8" fill="#ccffff" stroke="#111" stroke-width="0.8"/>
<rect x="905.4" y="347.0" width="6.8" height="24.5" rx="0.8" fill="#ccffff" stroke="#111" stroke-width="0.8"/>
<rect x="905.4" y="371.5" width="6.8" height="7.5" rx="0.8" fill="#ccffff" stroke="#111" stroke-width="0.8"/>
<path d="M904.30 323.00L904.30 375.00" stroke="#111" stroke-width="1.80" />
<rect x="1149.6" y="302.4" width="5.6" height="25.8" rx="0.8" fill="#ccffff" stroke="#111" stroke-width="0.8"/>
<path d="M1156.60 302.40L1156.60 328.20" stroke="#111" stroke-width="1.80" />
<rect x="1149.6" y="357.6" width="5.6" height="10.0" rx="0.8" fill="#ccffff" stroke="#111" stroke-width="0.8"/>
<path d="M1156.60 357.60L1156.60 367.60" stroke="#111" stroke-width="1.80" />
<rect x="1149.6" y="403.3" width="5.6" height="25.4" rx="0.8" fill="#ffe1ff" stroke="#111" stroke-width="0.8"/>
<path d="M1156.60 403.30L1156.60 428.70" stroke="#111" stroke-width="1.80" />
<rect x="1149.6" y="451.3" width="5.6" height="24.7" rx="0.8" fill="#ffe1ff" stroke="#111" stroke-width="0.8"/>
<path d="M1156.60 451.30L1156.60 476.00" stroke="#111" stroke-width="1.80" />
<rect x="1149.6" y="498.3" width="5.6" height="25.7" rx="0.8" fill="#ffe1ff" stroke="#111" stroke-width="0.8"/>
<path d="M1156.60 498.30L1156.60 524.00" stroke="#111" stroke-width="1.80" />
<rect x="1149.6" y="545.0" width="5.6" height="25.0" rx="0.8" fill="#ffe1ff" stroke="#111" stroke-width="0.8"/>
<path d="M1156.60 545.00L1156.60 570.00" stroke="#111" stroke-width="1.80" />
<path d="M831.00 374.60L904.00 374.60" stroke="#111" stroke-width="3.20" />
<path d="M836.00 374.40L903.00 374.40" stroke="#7aa" stroke-width="0.90" stroke-dasharray="20 1.5" />
<path d="M833.30 387.30L848.70 387.30A15.40 15.40 0 0 1 833.30 402.70" stroke="#222" stroke-width="0.80"/>
<text x="868.00" y="406.10" font-size="4.70" fill="#3a4660" stroke="none" text-anchor="middle" >TRAPPEROM</text>
<text x="868.00" y="411.30" font-size="4.70" fill="#3a4660" stroke="none" text-anchor="middle" >24,3 m²</text>
<path d="M907.60 392.00L907.60 425.00" stroke="#111" stroke-width="0.80" />
<path d="M912.40 392.00L912.40 494.00" stroke="#111" stroke-width="0.80" />
<path d="M908.60 425.00L908.60 494.00" stroke="#111" stroke-width="0.80" />
<path d="M909.300 395.200H893.300A16 16 0 0 0 901.800 409.300H912" stroke="#222" stroke-width="0.7"/>
<path d="M901.80 424.10L901.80 409.10A15.00 15.00 0 0 0 886.80 424.10" stroke="#222" stroke-width="0.80"/>
<rect x="901.80" y="409.30" width="5.70" height="14.80" stroke="#111" stroke-width="0.80" fill="#ccffff" />
<path d="M886.00 424.10L886.00 427.70" stroke="#111" stroke-width="0.80" />
<path d="M902.00 424.10L902.00 427.70" stroke="#111" stroke-width="0.80" />
<rect x="834.00" y="432.70" width="42.00" height="58.60" stroke="#111" stroke-width="1.30" fill="none" />
<path d="M834.00 437.74L876.00 437.74" stroke="#233" stroke-width="1.20" />
<path d="M834.00 442.58L876.00 442.58" stroke="#233" stroke-width="1.20" />
<path d="M834.00 447.42L876.00 447.42" stroke="#233" stroke-width="1.20" />
<path d="M834.00 452.26L876.00 452.26" stroke="#233" stroke-width="1.20" />
<path d="M834.00 457.10L876.00 457.10" stroke="#233" stroke-width="1.20" />
<path d="M834.00 461.94L876.00 461.94" stroke="#233" stroke-width="1.20" />
<path d="M834.00 466.78L876.00 466.78" stroke="#233" stroke-width="1.20" />
<path d="M834.00 471.62L876.00 471.62" stroke="#233" stroke-width="1.20" />
<rect x="853.30" y="432.70" width="4.70" height="39.30" stroke="#111" stroke-width="0.90" fill="#ccffff" />
<path d="M855.60 432.70L855.60 472.00" stroke="#333" stroke-width="0.60" />
<path d="M877.30 494.00L877.30 424.70L908.00 424.70" stroke="#111" stroke-width="0.90" />
<rect x="880.30" y="428.00" width="27.00" height="44.70" stroke="#111" stroke-width="1.00" fill="none" />
<text x="894.70" y="451.20" font-size="4.70" fill="#3a4660" stroke="none" text-anchor="middle" >HEIS</text>
<text x="894.70" y="456.00" font-size="4.70" fill="#3a4660" stroke="none" text-anchor="middle" >4,6 m²</text>
<rect x="880.30" y="476.30" width="27.30" height="15.00" stroke="#111" stroke-width="0.90" fill="none" />
<path d="M883.00 478.00L905.00 490.00" stroke="#222" stroke-width="0.90" stroke-dasharray="3.2 1.8" />
<path d="M905.00 478.00L883.00 490.00" stroke="#222" stroke-width="0.90" stroke-dasharray="3.2 1.8" />
<circle cx="894" cy="484" r="1" fill="#222"/>
<text x="938.70" y="406.10" font-size="4.70" fill="#3a4660" stroke="none" text-anchor="middle" >FELLES GANG</text>
<text x="938.70" y="411.10" font-size="4.70" fill="#3a4660" stroke="none" text-anchor="middle" >18,1 m²</text>
<path d="M973.80 392.50L973.80 408.50A16.00 16.00 0 0 1 957.80 392.50" stroke="#222" stroke-width="0.80"/>
<path d="M986.20 419.30L986.20 403.30A16.00 16.00 0 0 0 970.20 419.30" stroke="#222" stroke-width="0.80"/>
<path d="M1007.30 393.00L1007.30 408.30A15.30 15.30 0 0 1 992.00 393.00" stroke="#222" stroke-width="0.80"/>
<path d="M1027.30 415.30L1012.00 415.30A15.30 15.30 0 0 1 1027.30 400.00" stroke="#222" stroke-width="0.80"/>
<path d="M1028.80 392.00L1028.80 419.60L991.60 419.60L991.60 456.00" stroke="#111" stroke-width="2.20" />
<path d="M986.00 419.60L992.00 419.60" stroke="#111" stroke-width="1.20" />
<path d="M936.20 419.60L971.00 419.60" stroke="#222" stroke-width="2.40" />
<path d="M936.20 419.60L971.00 419.60" stroke="#9cc" stroke-width="1.00" />
<path d="M937.30 418.80L937.30 423.00" stroke="#111" stroke-width="2.00" />
<path d="M937.30 433.00L937.30 442.00" stroke="#111" stroke-width="2.00" />
<path d="M937.30 452.50L937.30 462.00" stroke="#111" stroke-width="2.00" />
<path d="M937.30 477.30L937.30 494.00" stroke="#111" stroke-width="2.00" />
<path d="M938.00 437.40L965.00 437.40" stroke="#555" stroke-width="2.40" />
<path d="M938.00 437.40L965.00 437.40" stroke="#aaa" stroke-width="1.10" />
<path d="M938.00 456.10L980.00 456.10" stroke="#222" stroke-width="2.40" />
<path d="M938.00 456.10L980.00 456.10" stroke="#9cc" stroke-width="1.00" />
<path d="M965.80 420.00L965.80 456.00" stroke="#222" stroke-width="2.40" />
<path d="M965.80 420.00L965.80 456.00" stroke="#9cc" stroke-width="1.00" />
<path d="M980.00 456.10L992.00 456.10" stroke="#111" stroke-width="2.00" />
<path d="M937.30 433.30L924.00 433.30A13.30 13.30 0 0 1 937.30 420.00" stroke="#222" stroke-width="0.80"/>
<path d="M937.30 452.70L924.00 452.70A13.30 13.30 0 0 1 937.30 439.40" stroke="#222" stroke-width="0.80"/>
<ellipse cx="957.5" cy="430.3" rx="4.300" ry="3" stroke="#111" stroke-width="0.7"/>
<rect x="961.00" y="427.80" width="3.60" height="5.00" stroke="#111" stroke-width="0.70" fill="none" />
<ellipse cx="957.5" cy="448.3" rx="4.300" ry="3" stroke="#111" stroke-width="0.7"/>
<rect x="961.00" y="445.80" width="3.60" height="5.00" stroke="#111" stroke-width="0.70" fill="none" />
<ellipse cx="946" cy="422.7" rx="3.600" ry="2.200" stroke="#111" stroke-width="0.8"/><path d="M944.500 421.7l3 2" stroke="#111" stroke-width="0.8"/>
<ellipse cx="946" cy="441.0" rx="3.600" ry="2.200" stroke="#111" stroke-width="0.8"/><path d="M944.500 440.0l3 2" stroke="#111" stroke-width="0.8"/>
<text x="948.00" y="431.30" font-size="4.70" fill="#3a4660" stroke="none" text-anchor="middle" >WC</text>
<text x="948.00" y="435.60" font-size="4.70" fill="#3a4660" stroke="none" text-anchor="middle" >1,6 m²</text>
<text x="948.00" y="448.90" font-size="4.70" fill="#3a4660" stroke="none" text-anchor="middle" >WC</text>
<text x="948.00" y="453.20" font-size="4.70" fill="#3a4660" stroke="none" text-anchor="middle" >1,6 m²</text>
<text x="978.00" y="436.50" font-size="4.70" fill="#3a4660" stroke="none" text-anchor="middle" >B.K.</text>
<text x="978.00" y="441.80" font-size="4.70" fill="#3a4660" stroke="none" text-anchor="middle" >3,2 m²</text>
<rect x="969.30" y="446.30" width="10.00" height="9.00" stroke="#111" stroke-width="0.80" fill="none" />
<path d="M969.30 449.50L979.30 449.50" stroke="#111" stroke-width="0.70" />
<rect x="971.00" y="451.00" width="6.50" height="3.00" stroke="#111" stroke-width="0.70" fill="none" />
<path d="M974.20 451.00L974.20 454.00" stroke="#111" stroke-width="0.80" />
<path d="M980.00 456.00L980.00 494.00" stroke="#111" stroke-width="2.00" />
<text x="952.00" y="473.20" font-size="4.70" fill="#3a4660" stroke="none" text-anchor="middle" >HCWC</text>
<text x="952.00" y="477.00" font-size="4.70" fill="#3a4660" stroke="none" text-anchor="middle" >5,5 m²</text>
<path d="M937.30 477.30L921.30 477.30A16.00 16.00 0 0 1 937.30 461.30" stroke="#222" stroke-width="0.80"/>
<path d="M913.30 493.30L913.30 478.00A15.30 15.30 0 0 1 928.60 493.30" stroke="#222" stroke-width="0.80"/>
<path d="M964.70 471.30L979.00 471.30" stroke="#111" stroke-width="0.80" />
<path d="M964.70 480.00L979.00 480.00" stroke="#111" stroke-width="0.80" />
<ellipse cx="972" cy="475.700" rx="5" ry="2.800" stroke="#111" stroke-width="0.7"/>
<path d="M972.50 473.00L972.50 478.40" stroke="#111" stroke-width="0.70" />
<path d="M975.50 473.30L975.50 478.00" stroke="#111" stroke-width="0.70" />
<rect x="944.70" y="484.00" width="10.00" height="9.30" stroke="#111" stroke-width="0.90" fill="none" />
<path d="M949.70 486.50L949.70 491.00" stroke="#111" stroke-width="0.70" />
<path d="M947.50 491.00L952.00 491.00" stroke="#111" stroke-width="0.70" />
<path d="M832.00 494.00L875.00 494.00" stroke="#111" stroke-width="1.00" />
<path d="M875.00 494.00L914.00 494.00" stroke="#111" stroke-width="1.00" />
<path d="M913.00 494.30L980.00 494.30" stroke="#111" stroke-width="1.80" />
<path d="M833.00 492.60L912.00 492.60" stroke="#466" stroke-width="0.60" stroke-dasharray="4 3" />
<path d="M1081.30 392.00L1081.30 586.00" stroke="#222" stroke-width="2.60" />
<path d="M1081.30 394.00L1081.30 586.00" stroke="#999" stroke-width="0.50" stroke-dasharray="7 2.5" />
<text x="1056.30" y="410.90" font-size="4.70" fill="#3a4660" stroke="none" text-anchor="middle" >INNGANG</text>
<text x="1056.30" y="415.90" font-size="4.70" fill="#3a4660" stroke="none" text-anchor="middle" >6,8 m²</text>
<text x="1022.30" y="439.20" font-size="4.70" fill="#3a4660" stroke="none" text-anchor="middle" >PRINTARKIV</text>
<text x="1022.30" y="443.70" font-size="4.70" fill="#3a4660" stroke="none" text-anchor="middle" >7,3 m²</text>
<path d="M1029.00 420.50L1055.50 431.80L1055.50 437.30" stroke="#111" stroke-width="0.80" />
<path d="M1031.00 419.30L1057.30 430.60L1057.30 437.30L1055.50 437.30" stroke="#111" stroke-width="0.80" />
<path d="M1056.00 452.70L1040.70 452.70A15.30 15.30 0 0 1 1056.00 437.40" stroke="#222" stroke-width="0.80"/>
<path d="M1039.30 452.70L1057.30 452.70" stroke="#111" stroke-width="0.80" />
<path d="M1058.00 432.00L1080.00 432.00" stroke="#888" stroke-width="0.70" stroke-dasharray="4 2.5" />
<path d="M991.60 457.20L1056.00 457.20" stroke="#555" stroke-width="2.40" />
<path d="M991.60 457.20L1056.00 457.20" stroke="#aaa" stroke-width="1.10" />
<path d="M1056.20 452.70L1056.20 494.50" stroke="#555" stroke-width="2.40" />
<path d="M1056.20 452.70L1056.20 494.50" stroke="#aaa" stroke-width="1.10" />
<path d="M1017.30 458.00L1017.30 494.50" stroke="#555" stroke-width="3.00" />
<path d="M1017.30 458.00L1017.30 494.50" stroke="#aaa" stroke-width="1.70" />
<path d="M992.00 466.00L1042.70 466.00" stroke="#111" stroke-width="0.70" />
<path d="M994.00 458.50L994.00 466.00" stroke="#222" stroke-width="0.80" />
<path d="M998.85 458.50L998.85 466.00" stroke="#222" stroke-width="0.80" />
<path d="M1003.70 458.50L1003.70 466.00" stroke="#222" stroke-width="0.80" />
<path d="M1008.55 458.50L1008.55 466.00" stroke="#222" stroke-width="0.80" />
<path d="M1013.40 458.50L1013.40 466.00" stroke="#222" stroke-width="0.80" />
<path d="M1023.10 458.50L1023.10 466.00" stroke="#222" stroke-width="0.80" />
<path d="M1027.95 458.50L1027.95 466.00" stroke="#222" stroke-width="0.80" />
<path d="M1032.80 458.50L1032.80 466.00" stroke="#222" stroke-width="0.80" />
<path d="M1037.65 458.50L1037.65 466.00" stroke="#222" stroke-width="0.80" />
<path d="M1042.50 458.50L1042.50 466.00" stroke="#222" stroke-width="0.80" />
<text x="999.30" y="475.80" font-size="4.70" fill="#3a4660" stroke="none" text-anchor="middle" >GARD.</text>
<text x="999.30" y="480.90" font-size="4.70" fill="#3a4660" stroke="none" text-anchor="middle" >5 m²</text>
<text x="1033.30" y="475.80" font-size="4.70" fill="#3a4660" stroke="none" text-anchor="middle" >GARD.</text>
<text x="1033.30" y="480.90" font-size="4.70" fill="#3a4660" stroke="none" text-anchor="middle" >5 m²</text>
<path d="M1013.30 494.00L1013.30 479.00A15.00 15.00 0 0 0 998.30 494.00" stroke="#222" stroke-width="0.80"/>
<path d="M1020.70 494.00L1020.70 479.00A15.00 15.00 0 0 1 1035.70 494.00" stroke="#222" stroke-width="0.80"/>
<path d="M992.00 494.30L998.70 494.30" stroke="#333" stroke-width="1.60" />
<path d="M1013.30 494.30L1020.70 494.30" stroke="#333" stroke-width="1.60" />
<path d="M1036.00 494.30L1056.00 494.30" stroke="#333" stroke-width="1.60" />
<path d="M984.8 493.500q0-3.500 3.500-3.500t3.500 3.500z" stroke="#111" stroke-width="0.7"/><circle cx="988.3" cy="491.800" r="1" stroke="#111" stroke-width="0.6"/>
<path d="M1043.7 493.500q0-3.500 3.500-3.500t3.500 3.500z" stroke="#111" stroke-width="0.7"/><circle cx="1047.2" cy="491.800" r="1" stroke="#111" stroke-width="0.6"/>
<path d="M1058.00 493.50L1080.00 493.50" stroke="#888" stroke-width="0.70" stroke-dasharray="5 3" />
<text x="801.50" y="463.70" font-size="4.90" fill="#3a4660" stroke="none" text-anchor="middle" >TEKNISK ROM</text>
<text x="801.50" y="467.90" font-size="4.90" fill="#3a4660" stroke="none" text-anchor="middle" >48,8 m²</text>
<text x="1112.00" y="410.90" font-size="4.70" fill="#3a4660" stroke="none" text-anchor="middle" >KONTOR</text>
<text x="1112.00" y="415.90" font-size="4.70" fill="#3a4660" stroke="none" text-anchor="middle" >9,7 m²</text>
<text x="1110.70" y="465.80" font-size="4.70" fill="#3a4660" stroke="none" text-anchor="middle" >KONTOR</text>
<text x="1110.70" y="470.90" font-size="4.70" fill="#3a4660" stroke="none" text-anchor="middle" >14,6 m²</text>
<path d="M1082.70 427.30L1098.50 427.30A15.80 15.80 0 0 0 1082.70 411.50" stroke="#222" stroke-width="0.80"/>
<rect x="1118.70" y="418.00" width="20.60" height="13.30" stroke="#111" stroke-width="0.80" fill="none" />
<rect x="1139.30" y="404.00" width="10.00" height="27.30" stroke="#111" stroke-width="0.80" fill="none" />
<rect x="1124" y="409.3" width="10.700" height="8" rx="1.800" stroke="#111" stroke-width="0.8"/>
<path d="M1124.50 411.00L1134.20 411.00" stroke="#333" stroke-width="0.60" />
<path d="M1125.500 423.5h7v4.500h-7zM1127 423.5q2-3 4 0" fill="#111" stroke="#111" stroke-width="0.7"/>
<path d="M1082.70 487.30L1098.50 487.30A15.80 15.80 0 0 0 1082.70 471.50" stroke="#222" stroke-width="0.80"/>
<rect x="1118.70" y="479.30" width="20.60" height="13.30" stroke="#111" stroke-width="0.80" fill="none" />
<rect x="1139.30" y="465.30" width="10.00" height="27.30" stroke="#111" stroke-width="0.80" fill="none" />
<rect x="1124" y="470.6" width="10.700" height="8" rx="1.800" stroke="#111" stroke-width="0.8"/>
<path d="M1124.50 472.30L1134.20 472.30" stroke="#333" stroke-width="0.60" />
<path d="M1125.500 484.8h7v4.500h-7zM1127 484.8q2-3 4 0" fill="#111" stroke="#111" stroke-width="0.7"/>
<path d="M1083.00 432.60L1150.00 432.60" stroke="#555" stroke-width="2.40" />
<path d="M1083.00 432.60L1150.00 432.60" stroke="#aaa" stroke-width="1.10" />
<path d="M1083.00 493.80L1150.00 493.80" stroke="#555" stroke-width="2.40" />
<path d="M1083.00 493.80L1150.00 493.80" stroke="#aaa" stroke-width="1.10" />
<path d="M1083.00 431.60L1090.00 431.60" stroke="#111" stroke-width="1.40" />
<path d="M1083.00 492.80L1090.00 492.80" stroke="#111" stroke-width="1.40" />
<rect x="1108" y="434.700" width="16" height="18.600" rx="1.200" stroke="#111" stroke-width="0.8"/>
<rect x="1100.70" y="434.90" width="7.30" height="8.10" stroke="#111" stroke-width="0.80" fill="none" />
<rect x="1124.00" y="434.90" width="7.60" height="8.10" stroke="#111" stroke-width="0.80" fill="none" />
<path d="M1102.30 434.90L1102.30 443.00" stroke="#444" stroke-width="0.50" />
<path d="M1130.00 434.90L1130.00 443.00" stroke="#444" stroke-width="0.50" />
<rect x="1100.70" y="445.30" width="7.30" height="8.00" stroke="#111" stroke-width="0.80" fill="none" />
<rect x="1124.00" y="445.30" width="7.60" height="8.00" stroke="#111" stroke-width="0.80" fill="none" />
<path d="M1102.30 445.30L1102.30 453.30" stroke="#444" stroke-width="0.50" />
<path d="M1130.00 445.30L1130.00 453.30" stroke="#444" stroke-width="0.50" />
<text x="1131.40" y="507.40" font-size="4.70" fill="#3a4660" stroke="none" text-anchor="middle" >MØTEROM</text>
<text x="1131.40" y="512.40" font-size="4.70" fill="#3a4660" stroke="none" text-anchor="middle" >22,1 m²</text>
<path d="M1083.00 498.30L1098.80 498.30A15.80 15.80 0 0 1 1083.00 514.10" stroke="#222" stroke-width="0.80"/>
<rect x="1101.30" y="519.40" width="9.20" height="9.40" stroke="#111" stroke-width="0.90" fill="none" />
<path d="M1103.00 519.40L1103.00 528.80" stroke="#444" stroke-width="0.60" />
<rect x="1122.00" y="519.40" width="9.20" height="9.40" stroke="#111" stroke-width="0.90" fill="none" />
<path d="M1129.50 519.40L1129.50 528.80" stroke="#444" stroke-width="0.60" />
<rect x="1101.30" y="531.00" width="9.20" height="8.70" stroke="#111" stroke-width="0.90" fill="none" />
<path d="M1103.00 531.00L1103.00 539.70" stroke="#444" stroke-width="0.60" />
<rect x="1122.00" y="531.00" width="9.20" height="8.70" stroke="#111" stroke-width="0.90" fill="none" />
<path d="M1129.50 531.00L1129.50 539.70" stroke="#444" stroke-width="0.60" />
<rect x="1101.30" y="542.80" width="9.20" height="9.40" stroke="#111" stroke-width="0.90" fill="none" />
<path d="M1103.00 542.80L1103.00 552.20" stroke="#444" stroke-width="0.60" />
<rect x="1122.00" y="542.80" width="9.20" height="9.40" stroke="#111" stroke-width="0.90" fill="none" />
<path d="M1129.50 542.80L1129.50 552.20" stroke="#444" stroke-width="0.60" />
<rect x="1101.30" y="554.50" width="9.20" height="9.50" stroke="#111" stroke-width="0.90" fill="none" />
<path d="M1103.00 554.50L1103.00 564.00" stroke="#444" stroke-width="0.60" />
<rect x="1122.00" y="554.50" width="9.20" height="9.50" stroke="#111" stroke-width="0.90" fill="none" />
<path d="M1129.50 554.50L1129.50 564.00" stroke="#444" stroke-width="0.60" />
<rect x="1111.75" y="512.10" width="9.00" height="8.30" stroke="#111" stroke-width="0.90" fill="none" />
<path d="M1111.75 513.80L1120.75 513.80" stroke="#444" stroke-width="0.60" />
<rect x="1111.75" y="562.90" width="9.00" height="9.30" stroke="#111" stroke-width="0.90" fill="none" />
<path d="M1111.75 570.50L1120.75 570.50" stroke="#444" stroke-width="0.60" />
<path d="M1109.40 516.30L1123.10 516.30L1126.30 519.50L1126.30 564.20L1123.10 567.40L1109.40 567.40L1106.20 564.20L1106.20 519.50Z" fill="none" stroke="#111" stroke-width="1.00"/>
<text x="1016.00" y="507.80" font-size="4.70" fill="#3a4660" stroke="none" text-anchor="middle" >KORRIDOR</text>
<text x="1016.00" y="513.00" font-size="4.70" fill="#3a4660" stroke="none" text-anchor="middle" >23,8 m²</text>
<path d="M875.00 520.60L1081.00 520.60" stroke="#111" stroke-width="2.00" />
<path d="M875.30 494.00L875.30 521.00" stroke="#111" stroke-width="2.20" />
<text x="861.00" y="518.80" font-size="4.70" fill="#3a4660" stroke="none" text-anchor="middle" >KONTOR</text>
<text x="861.00" y="524.20" font-size="4.70" fill="#3a4660" stroke="none" text-anchor="middle" >13,8 m²</text>
<path d="M876.70 497.00L892.70 497.00A16.00 16.00 0 0 1 876.70 513.00" stroke="#222" stroke-width="0.80"/>
<rect x="832.50" y="523.00" width="12.80" height="20.00" stroke="#111" stroke-width="0.80" fill="none" />
<rect x="832.50" y="543.00" width="27.10" height="10.70" stroke="#111" stroke-width="0.80" fill="none" />
<rect x="832.50" y="553.70" width="12.80" height="20.60" stroke="#111" stroke-width="0.80" fill="none" />
<rect x="832.50" y="574.30" width="27.10" height="10.20" stroke="#111" stroke-width="0.80" fill="none" />
<path d="M835.3 530.6h5.500l1.200 2v2.500l-1.200 2h-5.500z" fill="#111" stroke="none"/>
<rect x="846.7" y="528.3" width="9.0" height="10.7" rx="1.6" stroke="#111" stroke-width="0.8"/>
<path d="M853.70 528.80L853.70 538.50" stroke="#333" stroke-width="0.60" />
<path d="M835.3 561.3h5.500l1.200 2v2.500l-1.200 2h-5.500z" fill="#111" stroke="none"/>
<rect x="846.7" y="559.0" width="9.0" height="10.7" rx="1.6" stroke="#111" stroke-width="0.8"/>
<path d="M853.70 559.50L853.70 569.20" stroke="#333" stroke-width="0.60" />
<path d="M912.90 521.80L912.90 537.10A15.30 15.30 0 0 1 897.60 521.80" stroke="#222" stroke-width="0.80"/>
<text x="894.40" y="542.50" font-size="4.70" fill="#3a4660" stroke="none" text-anchor="middle" >KONTOR</text>
<text x="894.40" y="547.90" font-size="4.70" fill="#3a4660" stroke="none" text-anchor="middle" >9,2 m²</text>
<rect x="877.00" y="553.30" width="12.30" height="20.40" stroke="#111" stroke-width="0.80" fill="none" />
<rect x="877.00" y="573.70" width="26.70" height="10.80" stroke="#111" stroke-width="0.80" fill="none" />
<path d="M879.3 561.3h5.500l1.200 2v2.500l-1.200 2h-5.500z" fill="#111" stroke="none"/>
<rect x="890.0" y="559.0" width="9.6" height="10.7" rx="1.6" stroke="#111" stroke-width="0.8"/>
<path d="M897.60 559.50L897.60 569.20" stroke="#333" stroke-width="0.60" />
<path d="M916.50 521.00L916.50 585.00" stroke="#555" stroke-width="2.60" />
<path d="M916.50 521.00L916.50 585.00" stroke="#aaa" stroke-width="1.30" />
<path d="M954.10 521.80L954.10 537.10A15.30 15.30 0 0 1 938.80 521.80" stroke="#222" stroke-width="0.80"/>
<text x="935.00" y="542.50" font-size="4.70" fill="#3a4660" stroke="none" text-anchor="middle" >KONTOR</text>
<text x="935.00" y="547.90" font-size="4.70" fill="#3a4660" stroke="none" text-anchor="middle" >9,2 m²</text>
<rect x="918.20" y="553.30" width="12.30" height="20.40" stroke="#111" stroke-width="0.80" fill="none" />
<rect x="918.20" y="573.70" width="26.70" height="10.80" stroke="#111" stroke-width="0.80" fill="none" />
<path d="M920.5 561.3h5.500l1.200 2v2.500l-1.200 2h-5.500z" fill="#111" stroke="none"/>
<rect x="931.2" y="559.0" width="9.6" height="10.7" rx="1.6" stroke="#111" stroke-width="0.8"/>
<path d="M938.80 559.50L938.80 569.20" stroke="#333" stroke-width="0.60" />
<path d="M957.70 521.00L957.70 585.00" stroke="#555" stroke-width="2.60" />
<path d="M957.70 521.00L957.70 585.00" stroke="#aaa" stroke-width="1.30" />
<path d="M995.30 521.80L995.30 537.10A15.30 15.30 0 0 1 980.00 521.80" stroke="#222" stroke-width="0.80"/>
<text x="972.50" y="542.50" font-size="4.70" fill="#3a4660" stroke="none" text-anchor="middle" >KONTOR</text>
<text x="972.50" y="547.90" font-size="4.70" fill="#3a4660" stroke="none" text-anchor="middle" >9,2 m²</text>
<rect x="959.40" y="553.30" width="12.30" height="20.40" stroke="#111" stroke-width="0.80" fill="none" />
<rect x="959.40" y="573.70" width="26.70" height="10.80" stroke="#111" stroke-width="0.80" fill="none" />
<path d="M961.7 561.3h5.500l1.200 2v2.500l-1.200 2h-5.500z" fill="#111" stroke="none"/>
<rect x="972.4" y="559.0" width="9.6" height="10.7" rx="1.6" stroke="#111" stroke-width="0.8"/>
<path d="M980.00 559.50L980.00 569.20" stroke="#333" stroke-width="0.60" />
<path d="M998.90 521.00L998.90 585.00" stroke="#555" stroke-width="2.60" />
<path d="M998.90 521.00L998.90 585.00" stroke="#aaa" stroke-width="1.30" />
<path d="M1036.50 521.80L1036.50 537.10A15.30 15.30 0 0 1 1021.20 521.80" stroke="#222" stroke-width="0.80"/>
<text x="1014.00" y="542.50" font-size="4.70" fill="#3a4660" stroke="none" text-anchor="middle" >KONTOR</text>
<text x="1014.00" y="547.90" font-size="4.70" fill="#3a4660" stroke="none" text-anchor="middle" >9,2 m²</text>
<rect x="1000.60" y="553.30" width="12.30" height="20.40" stroke="#111" stroke-width="0.80" fill="none" />
<rect x="1000.60" y="573.70" width="26.70" height="10.80" stroke="#111" stroke-width="0.80" fill="none" />
<path d="M1002.9 561.3h5.500l1.200 2v2.500l-1.200 2h-5.500z" fill="#111" stroke="none"/>
<rect x="1013.6" y="559.0" width="9.6" height="10.7" rx="1.6" stroke="#111" stroke-width="0.8"/>
<path d="M1021.20 559.50L1021.20 569.20" stroke="#333" stroke-width="0.60" />
<path d="M1040.10 521.00L1040.10 585.00" stroke="#555" stroke-width="2.60" />
<path d="M1040.10 521.00L1040.10 585.00" stroke="#aaa" stroke-width="1.30" />
<path d="M1077.70 521.80L1077.70 537.10A15.30 15.30 0 0 1 1062.40 521.80" stroke="#222" stroke-width="0.80"/>
<text x="1055.00" y="542.50" font-size="4.70" fill="#3a4660" stroke="none" text-anchor="middle" >KONTOR</text>
<text x="1055.00" y="547.90" font-size="4.70" fill="#3a4660" stroke="none" text-anchor="middle" >9,2 m²</text>
<rect x="1041.80" y="553.30" width="12.30" height="20.40" stroke="#111" stroke-width="0.80" fill="none" />
<rect x="1041.80" y="573.70" width="26.70" height="10.80" stroke="#111" stroke-width="0.80" fill="none" />
<path d="M1044.1 561.3h5.500l1.200 2v2.500l-1.200 2h-5.500z" fill="#111" stroke="none"/>
<rect x="1054.8" y="559.0" width="9.6" height="10.7" rx="1.6" stroke="#111" stroke-width="0.8"/>
<path d="M1062.40 559.50L1062.40 569.20" stroke="#333" stroke-width="0.60" />
<path d="M875.30 521.00L875.30 585.00" stroke="#555" stroke-width="2.60" />
<path d="M875.30 521.00L875.30 585.00" stroke="#aaa" stroke-width="1.30" />
<rect x="844.7" y="584.800" width="26.0" height="5.700" rx="0.8" fill="#ffe1ff" stroke="#111" stroke-width="0.8"/>
<rect x="882.7" y="584.800" width="24.6" height="5.700" rx="0.8" fill="#ffe1ff" stroke="#111" stroke-width="0.8"/>
<rect x="924.0" y="584.800" width="26.0" height="5.700" rx="0.8" fill="#ffe1ff" stroke="#111" stroke-width="0.8"/>
<rect x="964.0" y="584.800" width="8.7" height="5.700" rx="0.8" fill="#ffe1ff" stroke="#111" stroke-width="0.8"/>
<rect x="984.0" y="584.800" width="9.3" height="5.700" rx="0.8" fill="#ffe1ff" stroke="#111" stroke-width="0.8"/>
<rect x="1007.2" y="584.800" width="24.8" height="5.700" rx="0.8" fill="#ffe1ff" stroke="#111" stroke-width="0.8"/>
<rect x="1049.5" y="584.800" width="25.5" height="5.700" rx="0.8" fill="#ffe1ff" stroke="#111" stroke-width="0.8"/>
<rect x="1093.8" y="584.800" width="25.3" height="5.700" rx="0.8" fill="#ffe1ff" stroke="#111" stroke-width="0.8"/>
<rect x="1129.8" y="584.800" width="9.4" height="5.700" rx="0.8" fill="#ffe1ff" stroke="#111" stroke-width="0.8"/>
<path d="M832.00 591.70L1157.00 591.70" stroke="#111" stroke-width="1.20" />
</svg>
<div class="abs" style="left:0;top:850px;width:60px;height:50px;background:#1f3544"></div>
<div class="abs" style="left:60px;top:851px;width:429px;height:49px;background:#f1f1f1;border:1px solid #fbfbfb;border-bottom:none"></div>
<div class="abs" style="left:866.5px;top:850px;width:61.5px;height:50px;background:#4a5967"></div>
<div class="t" style="left:110.70px;top:865.50px;font-size:19.00px;color:#222;letter-spacing:-0.353px;line-height:21.831px;">Skriv her for å søke</div>
<div class="t" style="left:1470.80px;top:855.65px;font-size:14.60px;color:#fff;letter-spacing:-0.284px;line-height:16.775px;">13:43</div>
<div class="t" style="left:1451.60px;top:879.35px;font-size:14.60px;color:#fff;letter-spacing:-0.097px;line-height:16.775px;">01.01.2021</div>
<svg class="abs" style="left:0;top:850px" width="1600" height="50" viewBox="0 850 1600 50" fill="none">
<path d="M20 867.500l8.800-1.300v8.500h-8.800zM29.800 866.100l10.500-1.500v10.100h-10.500zM20 875.700h8.800v8.500l-8.800-1.300zM29.800 875.700h10.500v10.100l-10.500-1.500z" fill="#fff"/>
<circle cx="87.800" cy="872.200" r="6.300" stroke="#222" stroke-width="1.500"/><path d="M83.300 876.800l-7.800 7.600" stroke="#222" stroke-width="1.600"/>
<g stroke="#fff" stroke-width="1.100"><rect x="510.700" y="870.900" width="12.300" height="7.400"/><path d="M510.700 865.300v2.300h12.300v-2.300M510.700 883.800v-2.300h12.300v2.300M528.800 865v19"/></g><rect x="527.700" y="871.300" width="2.200" height="2.200" fill="#fff"/>
<rect x="559.0" y="897.600" width="40.3" height="2.400" fill="#76b9ed"/>
<rect x="746.8" y="897.600" width="50.9" height="2.400" fill="#76b9ed"/>
<rect x="808.6" y="897.600" width="51.4" height="2.400" fill="#76b9ed"/>
<rect x="866.7" y="897.600" width="61.0" height="2.400" fill="#76b9ed"/>
<rect x="599.300" y="897.600" width="10.700" height="2.400" fill="#4d7fa8"/>
<rect x="577" y="862" width="20.500" height="25.400" rx="1.500" fill="#1a6fc9"/><rect x="584" y="862" width="6.800" height="6.700" fill="#2f9be8"/><rect x="590.800" y="862" width="6.700" height="6.700" fill="#4fc3f7"/><rect x="584" y="868.700" width="6.800" height="6.700" fill="#1a86dd"/><rect x="590.800" y="868.700" width="6.700" height="6.700" fill="#36a3ee"/><rect x="584" y="875.400" width="6.800" height="6.700" fill="#0f5cb0"/><rect x="590.800" y="875.400" width="6.700" height="6.700" fill="#1a78d0"/>
<rect x="568.900" y="867.800" width="14.600" height="14.500" rx="1.500" fill="#0f64bd"/><circle cx="576.200" cy="875" r="3.300" stroke="#fff" stroke-width="1.700"/>
<rect x="583.100" y="879.100" width="18.800" height="13.100" rx="1" fill="#e9b875"/><path d="M583.500 880.500l9 7 9-7" stroke="#fff" stroke-width="1.300"/>
<path d="M639.500 866.500v-2.500q0-3.500 3.500-3.500h6.500q3.500 0 3.500 3.500v2.500" stroke="#e8e8e8" stroke-width="1.800"/><path d="M631.500 866.500h29.500v21q0 2.500-2.500 2.500h-24.500q-2.500 0-2.500-2.500z" fill="#f2f2f2"/>
<rect x="640.500" y="873.500" width="5" height="5" fill="#f25022"/><rect x="646.500" y="873.500" width="5" height="5" fill="#7fba00"/><rect x="640.500" y="879.500" width="5" height="5" fill="#00a4ef"/><rect x="646.500" y="879.500" width="5" height="5" fill="#ffb900"/>
<path d="M697.800 867.500L710 861.300 712 862V869L704 871.500V880.500L697.800 883Z" fill="#c4261d"/><path d="M697.800 874.500L704 872.500V880.500L697.800 883Z" fill="#c0507a"/><path d="M701.500 884.300L704 880.500 712 882.500V888.800Z" fill="#e2231b"/><path d="M712 861.500L719.800 864.300V885.700L712 888.800Z" fill="#e04a0c"/><path d="M712 861.500L719.800 864.300V868.500L712 866.500Z" fill="#f57c14"/>
<path d="M757.500 866q0-1.500 1.500-1.500h7.500l2 2h15.500q1.500 0 1.500 1.500v14h-28z" fill="#f5b932"/><path d="M757.500 870h28v13q0 1-1 1h-26q-1 0-1-1z" fill="#ffd96b"/><path d="M762.500 876.500h18v8.800h-18z" fill="#2f8ad8"/><path d="M766.500 880.500h10v4.800h-10z" fill="#ffd96b"/><path d="M757.500 868.200h28v2h-28z" fill="#e6a223"/>
<defs><linearGradient id="eg" x1="0" x2="1" y1="0.3" y2="0"><stop offset="0" stop-color="#2b9fe0"/><stop offset=".5" stop-color="#35c0cf"/><stop offset="1" stop-color="#5ad75c"/></linearGradient></defs><circle cx="834" cy="875" r="15" fill="#16549f"/><path d="M819 875A15 15 0 0 0 834 890Q826.500 885 826.500 877 827 869.500 833 866.500 823 866 819 875Z" fill="#1f84da"/><path d="M819.500 871.500A15 15 0 0 1 849 875.500Q849 880 845 880.800L839.500 880.800Q841 877 839.200 874 836.500 870 831.500 870.500 826.500 871.500 824.800 876.500 823 872 819.500 871.500Z" fill="url(#eg)"/><circle cx="835" cy="877" r="3.800" fill="#203442"/><path d="M837 879.300L848.500 879.300Q847.500 882.500 845.500 884.500L838 883Z" fill="#203442"/>
<rect x="882.700" y="860.800" width="27.600" height="25.800" rx="4" fill="#b30b00"/><g stroke="#fff" stroke-width="1.300" fill="none"><ellipse cx="896.200" cy="868.400" rx="1.400" ry="2.300"/><path d="M896.300 870.700Q896.500 873 897 875.200"/><ellipse rx="1.500" ry="2.900" transform="translate(890.800 880.100) rotate(52)"/><path d="M893 878.300L897 875.200"/><ellipse rx="2.800" ry="1.400" transform="translate(902.500 876.700) rotate(14)"/><path d="M899.800 876L897 875.200"/></g>
<circle cx="1212.800" cy="876.500" r="12.800" fill="#fff"/><circle cx="1212.800" cy="876.500" r="10.600" fill="#1b98e0"/><path d="M1208.500 873q0-4.500 4.500-4.500 4.300 0 4.300 3.800 0 2.200-2.200 3.500-2 1.200-2 3.700" stroke="#fff" stroke-width="2.600"/><circle cx="1213" cy="883.800" r="1.700" fill="#fff"/><circle cx="1223" cy="882.800" r="6" fill="#f5a623"/><rect x="1222.100" y="881.500" width="1.800" height="5" fill="#fff"/><circle cx="1223" cy="879.300" r="1.100" fill="#fff"/>
<path d="M1241 878.500l7.500-7.500 7.500 7.500" stroke="#fff" stroke-width="1.300"/>
<path d="M1269 872q0-3.500 3.500-3.500h11q3.500 0 3.500 3.500v5.500h-18z" fill="#e6e6e6"/><rect x="1282.500" y="871.500" width="3" height="2.500" fill="#888"/><rect x="1270" y="877.500" width="16" height="2.500" fill="#b9b9b9"/><rect x="1273.500" y="880" width="5" height="3" fill="#d9d9d9"/><rect x="1268" y="882" width="9" height="3" fill="#eee"/><path d="M1279.500 878.500l7.500 6.500M1287 878.500l-7.500 6.500" stroke="#e02020" stroke-width="2"/>
<path d="M1302.500 881.700q-4.500 0-4.500-3.800 0-3.500 3.800-3.800 1-4.600 5.700-4.600 4 0 5.500 3.500 5.300.2 5.300 4.500 0 4.200-4.500 4.200z" fill="#1683d8"/><path d="M1301.800 874.100q1-4.600 5.700-4.600 4 0 5.500 3.500l-7 4z" fill="#3aa0f0"/>
<path d="M1328.500 868.500l19-2.500v16l-19-2.500z" stroke="#fff" stroke-width="1.200"/><path d="M1335 872.500q3-2.500 6 0M1341.500 872.800v-2.300M1341 877q-3 2.500-6 0M1334.500 876.700v2.300" stroke="#fff" stroke-width="1"/><circle cx="1344" cy="880.500" r="4.500" fill="#e81123"/>
<rect x="1363.500" y="870.500" width="14.500" height="9.500" rx="1" stroke="#fff" stroke-width="1.200" fill="#fff" fill-opacity="0.95"/><path d="M1360.500 868v3.500M1363 868v3.500M1359 871.500h5.500v2.500q0 2-2.700 2t-2.800-2zM1361.700 876v3.500h2" stroke="#fff" stroke-width="1"/>
<path d="M1396 866.500q1.500 0 1.500 1.500v5l9.500 2.500q1.300.4 1.300 1.500t-1.300 1l-9.500-.5v4l3 2v1.500l-4.500-1-4.500 1v-1.500l3-2v-4l-5 .5q-1.300 0-1.300-1t1.300-1.500l5-2.500v-5q0-1.500 1.500-1.500z" stroke="#fff" stroke-width="1.200" transform="rotate(90 1398 875.500)"/>
<path d="M1419.500 872.500h3.500l5-4.500v15l-5-4.500h-3.500z" stroke="#fff" stroke-width="1.200"/><path d="M1431 872q2 3.500 0 7M1434 870q3 5.500 0 11" stroke="#fff" stroke-width="1"/><path d="M1437 868q4 7.500 0 15" stroke="#8a95a0" stroke-width="1"/>
<path d="M1548.500 865h19.500v14.500h-13l-4 4v-4h-2.500z" fill="#fff"/><path d="M1552 869.500h12.500M1552 872.500h12.500M1552 875.500h12.500" stroke="#1e2c3e" stroke-width="1"/><circle cx="1568" cy="885" r="9.600" fill="#1e2c3e"/><circle cx="1568" cy="885" r="8.300" fill="#2a2f36" stroke="#59626c" stroke-width="1"/>
<text x="1568" y="890" font-size="14" fill="#fff" text-anchor="middle" font-family="Liberation Sans, sans-serif">4</text>
<path d="M1594.500 850v50" stroke="#8a95a0" stroke-width="1"/>
</svg>
</body></html>
